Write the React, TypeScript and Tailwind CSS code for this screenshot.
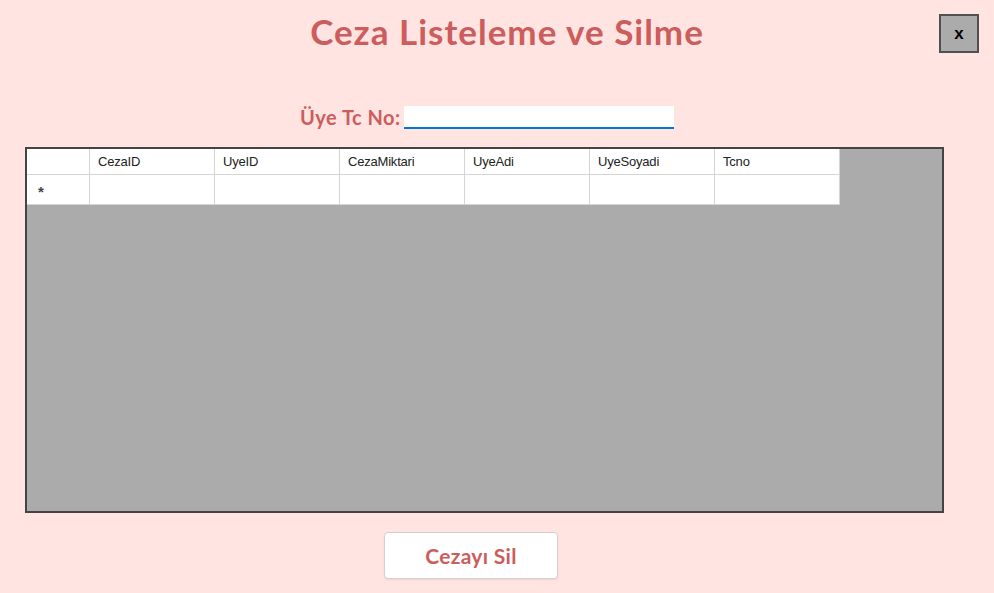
import React from "react";

const cols = ["CezaID", "UyeID", "CezaMiktari", "UyeAdi", "UyeSoyadi", "Tcno"];

export default function App() {
  return (
    <div className="w-[994px] h-[593px] bg-[#ffe4e1] relative overflow-hidden flex flex-col" style={{ fontFamily: "Lato, 'Noto Sans', sans-serif" }}>
      <h1 className="mt-[10px] w-full pl-[20px] text-center h-[42px] text-[35px] leading-[42px] font-bold text-[#cd5c5c] tracking-[1px]">
        Ceza Listeleme ve Silme
      </h1>
      <button className="absolute left-[939px] top-[14px] w-[40px] h-[39px] bg-[#ababab] border-2 border-[#505050] flex items-center justify-center text-[17px] font-bold text-black" style={{ fontFamily: "'Liberation Sans', Arial, sans-serif" }}>
        x
      </button>
      <div className="mt-[53px] ml-[300px] flex items-end">
        <span className="text-[20px] font-bold text-[#cd5c5c] leading-[24px] mr-[3px] tracking-[0.5px]">Üye Tc No:</span>
        <div className="w-[270px] h-[23px] bg-white border-b-2 border-[#0078d7]" />
      </div>
      <div className="mt-[18px] ml-[25px] w-[919px] h-[366px] border-2 border-[#444444] bg-[#ababab]" style={{ fontFamily: "'Liberation Sans', Arial, sans-serif" }}>
        <div className="flex">
          <div className="w-[63px] h-[26px] bg-white border-r border-b border-[#d4d4d4]" />
          {cols.map((c) => (
            <div key={c} className="w-[125px] h-[26px] bg-white border-r border-b border-[#d4d4d4] pl-[8px] text-[13px] leading-[25px] text-[#222] tracking-[-0.2px]">
              {c}
            </div>
          ))}
        </div>
        <div className="flex">
          <div className="w-[63px] h-[30px] bg-white border-r border-b border-[#d4d4d4] pl-[11px] text-[15px] leading-[34px] font-bold text-[#444]">*</div>
          {cols.map((c) => (
            <div key={c} className="w-[125px] h-[30px] bg-white border-r border-b border-[#d4d4d4]" />
          ))}
        </div>
      </div>
      <button className="mt-[19px] ml-[384px] w-[174px] h-[47px] bg-white border border-[#d8d0d0] rounded-[4px] shadow-[0_1px_2px_rgba(0,0,0,0.08)] text-[21px] font-bold text-[#cd5c5c] tracking-[0.3px]">
        Cezayı Sil
      </button>
    </div>
  );
}
